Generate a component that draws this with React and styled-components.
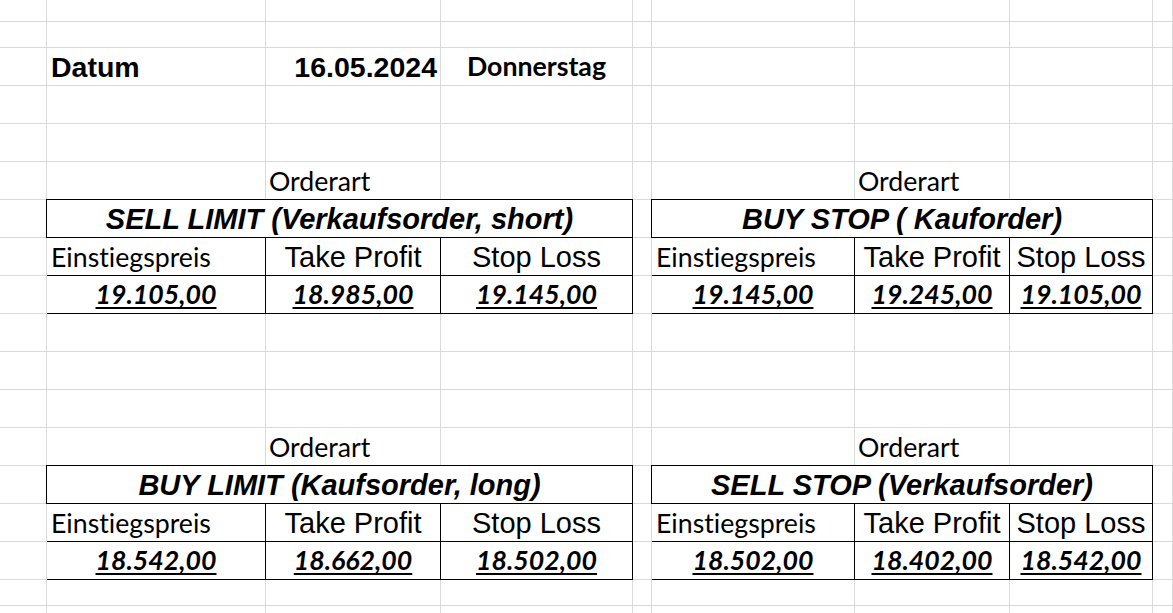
import React from 'react';
import styled, { createGlobalStyle } from 'styled-components';

const GlobalStyle = createGlobalStyle`
  html, body {
    margin: 0;
    padding: 0;
    background: #ffffff;
    overflow: hidden;
  }
`;

// column widths / row heights of the sheet (line included)
const COLS = [47, 219, 175, 192, 19, 203, 155, 143];
const ROWS = [22, 26, ...Array(14).fill(38), 26, 40];
const GRID = '#d9d9d9';

const Sheet = styled.div`
  display: grid;
  grid-template-columns: ${COLS.map((w) => `${w}px`).join(' ')} 1fr;
  grid-template-rows: ${ROWS.map((h) => `${h}px`).join(' ')};
  width: 1173px;
  height: 613px;
  overflow: hidden;
  background: #ffffff;
  color: #000;
`;

const Cell = styled.div`
  box-sizing: border-box;
  border-right: 1px solid ${GRID};
  border-bottom: 1px solid ${GRID};
  display: flex;
  align-items: flex-end;
  justify-content: ${(p) =>
    p.$align === 'right' ? 'flex-end' : p.$align === 'center' ? 'center' : 'flex-start'};
  padding: 0 ${(p) => p.$pad ?? 4}px ${(p) => p.$bottom ?? 5}px;
  white-space: nowrap;
  min-width: 0;
`;

const Text = styled.span`
  font-family: ${(p) => (p.$face === 'calibri' ? "Lato, 'Open Sans'" : "'Liberation Sans', Arial")}, sans-serif;
  font-size: ${(p) => p.$size ?? (p.$face === 'calibri' ? 26.7 : 29)}px;
  font-weight: ${(p) => (p.$bold ? 700 : 400)};
  font-style: ${(p) => (p.$italic ? 'italic' : 'normal')};
  font-variant-ligatures: none;
  text-decoration: ${(p) => (p.$underline ? 'underline' : 'none')};
  text-decoration-thickness: 2px;
  text-underline-offset: 3px;
  line-height: 1;
`;

const Table = styled.div`
  grid-column: span 3;
  grid-row: span 3;
  margin: -1px 0 0 -1px;
  display: grid;
  grid-template-columns: ${(p) => p.$cols.map((w) => `${w}px`).join(' ')};
  grid-template-rows: repeat(3, 38px);
  border-top: 1px solid #000;
  border-left: 1px solid #000;
  background: #ffffff;
`;

const TCell = styled(Cell)`
  border-right-color: #000;
  border-bottom-color: #000;
  grid-column: ${(p) => (p.$wide ? 'span 3' : 'auto')};
`;

const orders = [
  {
    row: 6,
    col: 1,
    title: 'SELL LIMIT (Verkaufsorder, short)',
    values: ['19.105,00', '18.985,00', '19.145,00'],
  },
  {
    row: 6,
    col: 5,
    title: 'BUY STOP ( Kauforder)',
    values: ['19.145,00', '19.245,00', '19.105,00'],
  },
  {
    row: 13,
    col: 1,
    title: 'BUY LIMIT (Kaufsorder, long)',
    values: ['18.542,00', '18.662,00', '18.502,00'],
  },
  {
    row: 13,
    col: 5,
    title: 'SELL STOP (Verkaufsorder)',
    values: ['18.502,00', '18.402,00', '18.542,00'],
  },
];

const OrderTable = ({ order }) => (
  <Table $cols={COLS.slice(order.col, order.col + 3)}>
    <TCell $wide $align="center" $bottom={3}>
      <Text $bold $italic>{order.title}</Text>
    </TCell>
    <TCell $bottom={4}>
      <Text $face="calibri">Einstiegspreis</Text>
    </TCell>
    <TCell $align="center" $pad={0} $bottom={3}>
      <Text>Take Profit</Text>
    </TCell>
    <TCell $align="center" $pad={0} $bottom={3}>
      <Text>Stop Loss</Text>
    </TCell>
    {order.values.map((v, i) => (
      <TCell key={i} $align="center" $pad={0} $bottom={5}>
        <Text $face="calibri" $bold $italic $underline>{v}</Text>
      </TCell>
    ))}
  </Table>
);

// plain text cells, keyed "row-col"
const content = {
  '2-1': { align: 'left', pad: 4, bottom: 4, node: <Text $bold $size={28.5}>Datum</Text> },
  '2-2': { align: 'right', pad: 3, bottom: 4, node: <Text $bold $size={28.5}>16.05.2024</Text> },
  '2-3': { align: 'center', pad: 0, bottom: 5, node: <Text $face="calibri" $bold>Donnerstag</Text> },
  '5-2': { align: 'left', pad: 3, bottom: 4, node: <Text $face="calibri">Orderart</Text> },
  '5-6': { align: 'left', pad: 3, bottom: 4, node: <Text $face="calibri">Orderart</Text> },
  '12-2': { align: 'left', pad: 3, bottom: 4, node: <Text $face="calibri">Orderart</Text> },
  '12-6': { align: 'left', pad: 3, bottom: 4, node: <Text $face="calibri">Orderart</Text> },
};

const App = () => {
  const items = [];
  for (let r = 0; r < ROWS.length; r++) {
    for (let c = 0; c <= COLS.length; c++) {
      const key = `${r}-${c}`;
      const order = orders.find((o) => o.row === r && o.col === c);
      if (order) {
        items.push(<OrderTable key={key} order={order} />);
        continue;
      }
      const covered = orders.some(
        (o) => r >= o.row && r < o.row + 3 && c >= o.col && c < o.col + 3
      );
      if (covered) continue;
      const info = content[key];
      items.push(
        <Cell key={key} $align={info?.align} $pad={info?.pad} $bottom={info?.bottom}>
          {info?.node}
        </Cell>
      );
    }
  }

  return (
    <>
      <GlobalStyle />
      <Sheet>{items}</Sheet>
    </>
  );
};

export default App;
